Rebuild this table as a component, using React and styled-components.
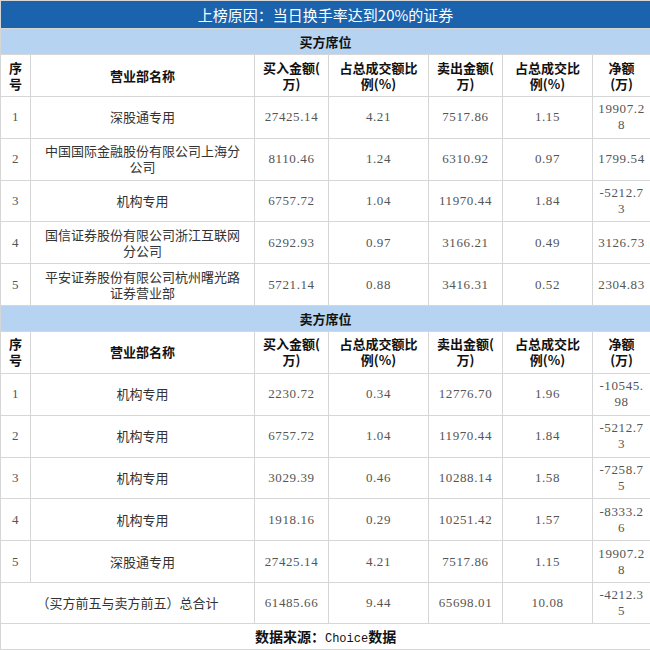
import React from 'react'
import styled, { createGlobalStyle } from 'styled-components'

const GlobalStyle = createGlobalStyle`
    body {
        margin: 0;
        background: #fff;
        font-family: "Noto Sans CJK SC", "Noto Sans", sans-serif;
    }
`

const Table = styled.table`
    width: 650px;
    border-collapse: collapse;
    table-layout: fixed;
    border: 1px solid #d6d6d6;
`

const TitleCell = styled.th`
    height: 27px;
    padding: 0;
    background: #1b63ad;
    color: #fff;
    font-size: 15px;
    font-weight: 400;
    text-align: center;
    border: 1px solid #d6d6d6;
`

const SectionCell = styled.th`
    height: 25px;
    padding: 0;
    background: #b6d4f1;
    color: #111;
    font-size: 13px;
    font-weight: 700;
    text-align: center;
    border: 1px solid #d6d6d6;
`

const HeadCell = styled.th`
    height: 41px;
    padding: 0 2px;
    font-size: 13px;
    line-height: 16px;
    font-weight: 700;
    color: #111;
    text-align: center;
    border: 1px solid #d6d6d6;
`

const Row = styled.tr`
    height: ${p => p.$h || 41.8}px;
`

const Cell = styled.td`
    padding: 0 ${p => (p.$name ? 10 : 3)}px;
    text-align: center;
    border: 1px solid #d6d6d6;
    font-family: ${p => (p.$num ? '"Liberation Serif", "Noto Sans CJK SC", serif' : '"Noto Sans CJK SC", sans-serif')};
    font-size: 13px;
    line-height: 16px;
    letter-spacing: ${p => (p.$num ? '0.6px' : '0')};
    color: ${p => (p.$num ? '#555' : '#333')};
`

const FooterCell = styled.td`
    height: 25px;
    padding: 0;
    text-align: center;
    border: 1px solid #d6d6d6;
    font-size: 14px;
    font-weight: 700;
    color: #111;
`

const Mono = styled.span`
    font-family: "Liberation Mono", monospace;
    font-weight: 400;
    font-size: 12px;
`

const widths = [30, 224, 74, 100, 74, 90, 58]

const headers = [
    ['序', '号'],
    ['营业部名称'],
    ['买入金额(', '万)'],
    ['占总成交额比', '例(%)'],
    ['卖出金额(', '万)'],
    ['占总成交比', '例(%)'],
    ['净额', '(万)'],
]

const buyers = [
    ['1', '深股通专用', '27425.14', '4.21', '7517.86', '1.15', '19907.28'],
    ['2', '中国国际金融股份有限公司上海分公司', '8110.46', '1.24', '6310.92', '0.97', '1799.54'],
    ['3', '机构专用', '6757.72', '1.04', '11970.44', '1.84', '-5212.73'],
    ['4', '国信证券股份有限公司浙江互联网分公司', '6292.93', '0.97', '3166.21', '0.49', '3126.73'],
    ['5', '平安证券股份有限公司杭州曙光路证券营业部', '5721.14', '0.88', '3416.31', '0.52', '2304.83'],
]

const sellers = [
    ['1', '机构专用', '2230.72', '0.34', '12776.70', '1.96', '-10545.98'],
    ['2', '机构专用', '6757.72', '1.04', '11970.44', '1.84', '-5212.73'],
    ['3', '机构专用', '3029.39', '0.46', '10288.14', '1.58', '-7258.75'],
    ['4', '机构专用', '1918.16', '0.29', '10251.42', '1.57', '-8333.26'],
    ['5', '深股通专用', '27425.14', '4.21', '7517.86', '1.15', '19907.28'],
]

// the net column is narrow: anything past 7 characters drops to a second line
const Net = ({ value }) =>
    value.length > 7 ? <>{value.slice(0, 7)}<br />{value.slice(7)}</> : value

const HeaderRow = () => (
    <tr>
        {headers.map((h, i) => (
            <HeadCell key={i}>
                {h.map((line, j) => (
                    <React.Fragment key={j}>{j > 0 && <br />}{line}</React.Fragment>
                ))}
            </HeadCell>
        ))}
    </tr>
)

const DataRow = ({ r }) => (
    <Row>
        <Cell $num>{r[0]}</Cell>
        <Cell $name>{r[1]}</Cell>
        <Cell $num>{r[2]}</Cell>
        <Cell $num>{r[3]}</Cell>
        <Cell $num>{r[4]}</Cell>
        <Cell $num>{r[5]}</Cell>
        <Cell $num><Net value={r[6]} /></Cell>
    </Row>
)

const App = () => {
    return (
        <>
            <GlobalStyle />
            <Table>
                <colgroup>
                    {widths.map((w, i) => <col key={i} style={{ width: w }} />)}
                </colgroup>
                <tbody>
                    <tr><TitleCell colSpan={7}>上榜原因：当日换手率达到20%的证券</TitleCell></tr>
                    <tr><SectionCell colSpan={7}>买方席位</SectionCell></tr>
                    <HeaderRow />
                    {buyers.map(r => <DataRow key={'b' + r[0]} r={r} />)}
                    <tr><SectionCell colSpan={7}>卖方席位</SectionCell></tr>
                    <HeaderRow />
                    {sellers.map(r => <DataRow key={'s' + r[0]} r={r} />)}
                    <Row $h={41}>
                        <Cell colSpan={2}>（买方前五与卖方前五）总合计</Cell>
                        <Cell $num>61485.66</Cell>
                        <Cell $num>9.44</Cell>
                        <Cell $num>65698.01</Cell>
                        <Cell $num>10.08</Cell>
                        <Cell $num><Net value="-4212.35" /></Cell>
                    </Row>
                    <tr><FooterCell colSpan={7}>数据来源：<Mono>Choice</Mono>数据</FooterCell></tr>
                </tbody>
            </Table>
        </>
    )
}

export default App
